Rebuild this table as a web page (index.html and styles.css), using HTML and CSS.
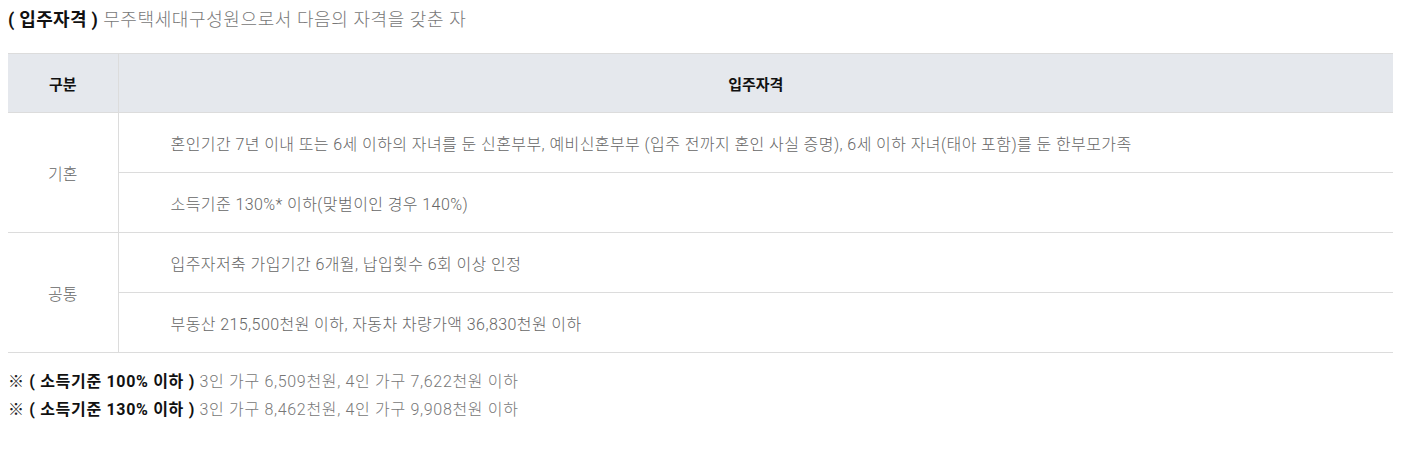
FILE: index.html
```html
<!DOCTYPE html>
<html lang="ko">
<head>
<meta charset="utf-8">
<link rel="stylesheet" href="styles.css">
</head>
<body>
<p class="title"><strong>( 입주자격 )</strong> 무주택세대구성원으로서 다음의 자격을 갖춘 자</p>
<table class="qual">
  <colgroup><col class="c1"><col></colgroup>
  <thead>
    <tr><th>구분</th><th>입주자격</th></tr>
  </thead>
  <tbody>
    <tr><td class="cat" rowspan="2">기혼</td><td class="desc">혼인기간 7년 이내 또는 6세 이하의 자녀를 둔 신혼부부, 예비신혼부부 (입주 전까지 혼인 사실 증명), 6세 이하 자녀(태아 포함)를 둔 한부모가족</td></tr>
    <tr><td class="desc">소득기준 130%* 이하(맞벌이인 경우 140%)</td></tr>
    <tr><td class="cat" rowspan="2">공통</td><td class="desc">입주자저축 가입기간 6개월, 납입횟수 6회 이상 인정</td></tr>
    <tr><td class="desc">부동산 215,500천원 이하, 자동차 차량가액 36,830천원 이하</td></tr>
  </tbody>
</table>
<div class="notes">
  <p><span class="mark">※</span> <strong>( 소득기준 100% 이하 )</strong> 3인 가구 6,509천원, 4인 가구 7,622천원 이하</p>
  <p><span class="mark">※</span> <strong>( 소득기준 130% 이하 )</strong> 3인 가구 8,462천원, 4인 가구 9,908천원 이하</p>
</div>
</body>
</html>
```
FILE: styles.css
```css
body {
  margin: 8px;
  font-family: Roboto, "Noto Sans CJK KR", sans-serif;
  color: #777;
  background: #fff;
}
p { margin: 0; }
strong { color: #111; font-weight: 700; }
.title {
  font-size: 18px;
  line-height: 24px;
  letter-spacing: 0.6px;
  font-weight: 300;
  margin-bottom: 21px;
}
.title strong { letter-spacing: 0.3px; }
.qual {
  width: 1385px;
  border-collapse: collapse;
  font-size: 16px;
  letter-spacing: 0.42px;
}
.qual .c1 { width: 110px; }
.qual th {
  background: #e5e8ed;
  color: #111;
  font-weight: 700;
  font-size: 15px;
  letter-spacing: 0;
  height: 58px;
  padding: 0;
  border-top: 1px solid #dcdcdc;
  border-bottom: 1px solid #dcdcdc;
  text-align: center;
}
.qual th + th { border-left: 1px solid #dcdcdc; }
.qual td {
  border-bottom: 1px solid #dcdcdc;
  height: 59px;
  padding: 0;
  color: #666;
  font-weight: 300;
}
.qual td.cat { text-align: center; border-right: 1px solid #dcdcdc; letter-spacing: 0; }
.qual td.desc { padding-left: 52px; }
.notes {
  margin-top: 15px;
  font-size: 16px;
  line-height: 28px;
  letter-spacing: 0.68px;
  font-weight: 300;
}
.notes .mark { color: #222; font-weight: 400; }
```
